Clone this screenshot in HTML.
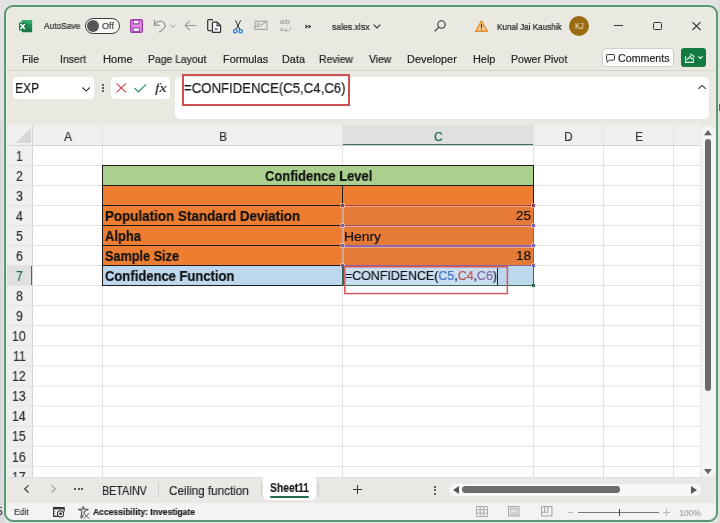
<!DOCTYPE html>
<html><head><meta charset="utf-8">
<style>
*{margin:0;padding:0;box-sizing:border-box}
html,body{width:720px;height:523px;overflow:hidden;background:#e2e2e3;font-family:"Liberation Sans",sans-serif;color:#1f1f1f;position:relative}
.a{position:absolute}
.t{position:absolute;white-space:nowrap;line-height:1;will-change:transform;-webkit-text-stroke:0.2px currentColor}
svg{position:absolute;overflow:visible}
</style></head><body>
<div class="a" style="left:0px;top:120px;width:5px;height:403px;background:#d9d9d9"></div>
<div class="a" style="left:718px;top:0px;width:2px;height:523px;background:#dedede"></div>
<div class="t" style="left:-3.5px;top:507px;font-size:10px;color:#333">5:</div>
<div class="a" style="left:719px;top:104px;width:1px;height:6.6px;background:#666"></div>
<div class="a" style="left:4px;top:5px;width:714px;height:517px;border-radius:9px;background:#eae9e1"></div>
<svg style="left:18.5px;top:19.5px" width="14" height="13" viewBox="0 0 14 13">
<rect x="2.8" y="0" width="10.3" height="12.3" rx="0.8" fill="#1b7a47"/>
<rect x="2.8" y="0" width="10.3" height="4.1" rx="0.8" fill="#2ea96a"/>
<rect x="2.8" y="4.1" width="10.3" height="4.1" fill="#1f8c52"/>
<rect x="0" y="2.4" width="7.3" height="8" rx="0.8" fill="#117a40"/>
<path d="M1.5 3.9 L5.8 9.1 M5.8 3.9 L1.5 9.1" stroke="#fff" stroke-width="1.6"/>
</svg>
<div class="t" style="left:44.10px;top:21.66px;font-size:8.55px;color:#262626;font-weight:normal;transform:scaleX(0.9787);transform-origin:0 0;">AutoSave</div>
<div class="a" style="left:84.5px;top:18px;width:35.5px;height:15.6px;border:1px solid #3c3c3c;border-radius:8px;background:#f8f8f5"></div>
<div class="a" style="left:87.4px;top:20.3px;width:11.4px;height:11.4px;border-radius:6px;background:#565656"></div>
<div class="t" style="left:102.39px;top:21.66px;font-size:8.55px;color:#4a4a4a;font-weight:normal;transform:scaleX(1.0640);transform-origin:0 0;">Off</div>
<svg style="left:130px;top:19px" width="13" height="14" viewBox="0 0 13 14">
<rect x="0.65" y="0.65" width="11.7" height="12.7" rx="1.3" fill="#e08ee6" stroke="#9e3daa" stroke-width="1.3"/>
<rect x="3.2" y="1.2" width="5.8" height="3.6" fill="#fff" stroke="#9e3daa" stroke-width="1.1"/>
<rect x="3.2" y="8.8" width="6.2" height="3.8" fill="#fff" stroke="#9e3daa" stroke-width="1.1"/>
</svg>
<svg style="left:153px;top:19px" width="14" height="14" viewBox="0 0 14 14">
<path d="M1.6 0.8 L1.3 6.3 L6.6 6.1" fill="none" stroke="#8c8c8c" stroke-width="1.1"/>
<path d="M1.5 6 C3.5 1.8 9.5 0.8 11.6 4.6 C13 7.3 11 10.5 6.2 13.2" fill="none" stroke="#8c8c8c" stroke-width="1.1"/>
</svg>
<svg style="left:170px;top:24px" width="6" height="4" viewBox="0 0 6 4"><path d="M0.5 0.8 L3 3.2 L5.5 0.8" fill="none" stroke="#999" stroke-width="0.9"/></svg>
<svg style="left:184px;top:20px" width="13" height="11" viewBox="0 0 13 11"><path d="M12.5 5.5 H1 M5.8 0.8 L1 5.5 L5.8 10.2" fill="none" stroke="#9a9a9a" stroke-width="1.1"/></svg>
<svg style="left:207px;top:19px" width="15" height="14" viewBox="0 0 15 14">
<path d="M5.6 1.6 V1.4 C5.6 0.9 5.2 0.6 4.7 0.6 H1.7 C1.1 0.6 0.7 1 0.7 1.6 V10.6 C0.7 11.2 1.1 11.6 1.7 11.6 H4.6" fill="none" stroke="#333" stroke-width="1.2"/>
<path d="M5.4 4 C5.4 3.4 5.8 3.1 6.3 3.1 H10.2 L13.6 6.5 V12.5 C13.6 13 13.2 13.4 12.7 13.4 H6.3 C5.8 13.4 5.4 13 5.4 12.5 Z" fill="#f4f4f2" stroke="#333" stroke-width="1.2"/>
<path d="M10.1 3.2 V6.6 H13.5" fill="none" stroke="#333" stroke-width="1.1"/>
<rect x="7.8" y="9" width="2.8" height="2.2" fill="#8a8a8a"/>
</svg>
<svg style="left:233px;top:19.5px" width="10" height="14" viewBox="0 0 10 14">
<path d="M2.3 0.3 L6.9 9.4 M7.7 0.3 L3.1 9.4" stroke="#333" stroke-width="1"/>
<circle cx="2.3" cy="11.2" r="1.75" fill="#d4e4f4" stroke="#3a80c8" stroke-width="1.3"/>
<circle cx="7.7" cy="11.2" r="1.75" fill="#d4e4f4" stroke="#3a80c8" stroke-width="1.3"/>
</svg>
<svg style="left:254px;top:20px" width="14" height="10" viewBox="0 0 14 10">
<path d="M0.6 6 V9.4 H12.9 V1.4 H5.3" fill="none" stroke="#a5a5a5" stroke-width="1.1"/>
<path d="M1.2 6.5 V1.8 C1.2 0.3 4.3 0.3 4.3 1.8 V6.5 Z" fill="none" stroke="#a5a5a5" stroke-width="1.1"/>
<path d="M2.75 3.5 V5" stroke="#a5a5a5" stroke-width="0.9"/>
<path d="M5.3 6.2 L12.3 1.9" stroke="#a5a5a5" stroke-width="1.1"/>
</svg>
<div class="t" style="left:279.66px;top:19.41px;font-size:6.96px;color:#a5a5a5;font-weight:normal;transform:scaleX(1.2282);transform-origin:0 0;letter-spacing:0.4px">ab</div>
<div class="t" style="left:279.66px;top:26.98px;font-size:5.22px;color:#a5a5a5;font-weight:normal;transform:scaleX(1.6303);transform-origin:0 0;">c</div>
<svg style="left:284px;top:26.5px" width="7" height="5.5" viewBox="0 0 7 5.5"><path d="M6.5 0 V1.5 C6.5 3 5.5 3.5 4.5 3.5 H1 M2.8 1.5 L0.8 3.5 L2.8 5.3" fill="none" stroke="#a5a5a5" stroke-width="0.9"/></svg>
<svg style="left:304.7px;top:25.2px" width="6" height="3.2" viewBox="0 0 6 3.2"><path d="M0.4 0.2 L2.2 1.6 L0.4 3 M3.5 0.2 L5.3 1.6 L3.5 3" fill="none" stroke="#222" stroke-width="1.1"/></svg>
<div class="t" style="left:331.54px;top:23.21px;font-size:9.20px;color:#262626;font-weight:normal;transform:scaleX(0.9414);transform-origin:0 0;">sales.xlsx</div>
<svg style="left:373px;top:24.2px" width="8" height="5" viewBox="0 0 8 5"><path d="M0.6 0.6 L4 4 L7.4 0.6" fill="none" stroke="#333" stroke-width="1.1"/></svg>
<svg style="left:433.5px;top:19.5px" width="12" height="12" viewBox="0 0 12 12"><circle cx="7.5" cy="4.5" r="3.7" fill="none" stroke="#333" stroke-width="1.1"/><path d="M4.6 7.4 L0.7 11.3" stroke="#333" stroke-width="1.2"/></svg>
<svg style="left:475px;top:19.5px" width="13" height="12" viewBox="0 0 13 12"><path d="M6.5 0.8 L12.3 11.3 H0.7 Z" fill="#f5c78a" stroke="#e08a2a" stroke-width="1.2" stroke-linejoin="round"/><path d="M6.5 4 V8" stroke="#333" stroke-width="1.1"/><circle cx="6.5" cy="9.6" r="0.7" fill="#333"/></svg>
<div class="t" style="left:496.95px;top:21.63px;font-size:9.42px;color:#222;font-weight:normal;transform:scaleX(0.8660);transform-origin:0 0;">Kunal Jai Kaushik</div>
<div class="a" style="left:569.1px;top:15.8px;width:19.9px;height:19.9px;border-radius:10px;background:#9a6b12"></div>
<div class="t" style="left:575.00px;top:21.57px;font-size:9.13px;color:#f6ead2;font-weight:normal;transform:scaleX(0.8241);transform-origin:0 0;-webkit-text-stroke:0">KJ</div>
<div class="a" style="left:614.4px;top:25px;width:8.3px;height:1.2px;background:#333"></div>
<div class="a" style="left:653.3px;top:22.2px;width:8.9px;height:7.8px;border:1.2px solid #333;border-radius:1.5px"></div>
<svg style="left:692px;top:22.2px" width="9" height="8.2" viewBox="0 0 9 8.2"><path d="M0.4 0.2 L8.6 8 M8.6 0.2 L0.4 8" stroke="#333" stroke-width="1.1"/></svg>
<div class="t" style="left:22.46px;top:53.64px;font-size:10.58px;color:#262626;font-weight:normal;transform:scaleX(0.9929);transform-origin:0 0;">File</div>
<div class="t" style="left:60.16px;top:53.64px;font-size:10.58px;color:#262626;font-weight:normal;transform:scaleX(0.9825);transform-origin:0 0;">Insert</div>
<div class="t" style="left:103.11px;top:53.64px;font-size:10.58px;color:#262626;font-weight:normal;transform:scaleX(1.0531);transform-origin:0 0;">Home</div>
<div class="t" style="left:148.47px;top:53.64px;font-size:10.58px;color:#262626;font-weight:normal;transform:scaleX(0.9811);transform-origin:0 0;">Page Layout</div>
<div class="t" style="left:222.73px;top:53.64px;font-size:10.58px;color:#262626;font-weight:normal;transform:scaleX(1.0256);transform-origin:0 0;">Formulas</div>
<div class="t" style="left:282.33px;top:53.64px;font-size:10.58px;color:#262626;font-weight:normal;transform:scaleX(1.0290);transform-origin:0 0;">Data</div>
<div class="t" style="left:319.27px;top:53.64px;font-size:10.58px;color:#262626;font-weight:normal;transform:scaleX(0.9777);transform-origin:0 0;">Review</div>
<div class="t" style="left:369.45px;top:53.64px;font-size:10.58px;color:#262626;font-weight:normal;transform:scaleX(0.9783);transform-origin:0 0;">View</div>
<div class="t" style="left:406.83px;top:53.64px;font-size:10.58px;color:#262626;font-weight:normal;transform:scaleX(1.0321);transform-origin:0 0;">Developer</div>
<div class="t" style="left:472.83px;top:53.64px;font-size:10.58px;color:#262626;font-weight:normal;transform:scaleX(1.0307);transform-origin:0 0;">Help</div>
<div class="t" style="left:510.86px;top:53.64px;font-size:10.58px;color:#262626;font-weight:normal;transform:scaleX(0.9974);transform-origin:0 0;">Power Pivot</div>
<div class="a" style="left:601.8px;top:47.7px;width:72.4px;height:19.5px;background:#fdfdfc;border:1px solid #cfcfcf;border-radius:4px"></div>
<svg style="left:606.3px;top:53.6px" width="9" height="9" viewBox="0 0 9 9"><path d="M1.3 0.55 H7.7 C8.1 0.55 8.45 0.9 8.45 1.3 V5.4 C8.45 5.8 8.1 6.15 7.7 6.15 H3.4 L1.1 8.3 V6.15 C0.75 6.1 0.55 5.8 0.55 5.4 V1.3 C0.55 0.9 0.9 0.55 1.3 0.55 Z" fill="none" stroke="#333" stroke-width="1"/></svg>
<div class="t" style="left:618.37px;top:53.24px;font-size:10.58px;color:#262626;font-weight:normal;transform:scaleX(1.0089);transform-origin:0 0;">Comments</div>
<div class="a" style="left:681.1px;top:48.3px;width:24.9px;height:18.9px;background:#137a41;border-radius:3px"></div>
<svg style="left:684.6px;top:52.8px" width="10" height="10" viewBox="0 0 10 10"><path d="M0.6 3.2 V9.4 H8.3 V5.6" fill="none" stroke="#e8f5ec" stroke-width="1.1"/><path d="M2.3 6.8 C2.4 4.8 4 3.5 6.2 3.3 L5.7 1 L9.4 3.4 L6.6 6.1 L6.3 4.6 C4.6 4.8 3.3 5.6 2.3 6.8 Z" fill="none" stroke="#e8f5ec" stroke-width="1" stroke-linejoin="round"/></svg>
<svg style="left:698px;top:56.3px" width="5" height="3" viewBox="0 0 5 3"><path d="M0.4 0.4 L2.5 2.5 L4.6 0.4" fill="none" stroke="#fff" stroke-width="1.1"/></svg>
<div class="a" style="left:6px;top:69.6px;width:711px;height:1.2px;background:#d7d5cd"></div>
<div class="a" style="left:12.5px;top:77px;width:81.7px;height:22.2px;background:#fff;border-radius:4px"></div>
<div class="t" style="left:15.34px;top:81.28px;font-size:14.20px;color:#1a1a1a;font-weight:normal;transform:scaleX(0.8472);transform-origin:0 0;">EXP</div>
<svg style="left:81.7px;top:86.7px" width="8.3" height="4.6" viewBox="0 0 8.3 4.6"><path d="M0.5 0.5 L4.15 4.1 L7.8 0.5" fill="none" stroke="#333" stroke-width="1.1"/></svg>
<div class="a" style="left:101.5px;top:83.7px;width:2px;height:2px;background:#333;border-radius:1px"></div>
<div class="a" style="left:101.5px;top:87px;width:2px;height:2px;background:#333;border-radius:1px"></div>
<div class="a" style="left:101.5px;top:90.3px;width:2px;height:2px;background:#333;border-radius:1px"></div>
<div class="a" style="left:111.3px;top:77px;width:58.7px;height:22.2px;background:#fff;border-radius:4px"></div>
<svg style="left:115.8px;top:83.3px" width="10.5" height="9.7" viewBox="0 0 10.5 9.7"><path d="M0.4 0.4 L10.1 9.3 M10.1 0.4 L0.4 9.3" stroke="#c8434a" stroke-width="1.1"/></svg>
<svg style="left:134.2px;top:83.7px" width="12.5" height="8.3" viewBox="0 0 12.5 8.3"><path d="M0.4 4 L4.3 7.8 L12.1 0.4" fill="none" stroke="#3b9a6a" stroke-width="1.2"/></svg>
<div class="t" style="left:154.84px;top:81.07px;font-size:13.50px;color:#333;font-weight:normal;transform:scaleX(1.1873);transform-origin:0 0;font-family:'Liberation Serif',serif;font-style:italic;">fx</div>
<div class="a" style="left:174.7px;top:77px;width:534.8px;height:42.2px;background:#fff;border-radius:5px"></div>
<div class="t" style="left:183.94px;top:81.45px;font-size:14.35px;color:#1a1a1a;font-weight:normal;transform:scaleX(0.9186);transform-origin:0 0;">=CONFIDENCE(C5,C4,C6)</div>
<div class="a" style="left:182px;top:74px;width:168px;height:31.5px;border:2px solid #cd5052"></div>
<svg style="left:697.8px;top:85px" width="8.2" height="4.2" viewBox="0 0 8.2 4.2"><path d="M0.4 3.9 L4.1 0.4 L7.8 3.9" fill="none" stroke="#333" stroke-width="1.1"/></svg>
<div class="a" style="left:6px;top:125px;width:694px;height:352px;background:#fff"></div>
<div class="a" style="left:6px;top:125px;width:694px;height:20px;background:#efefef"></div>
<div class="a" style="left:6px;top:125px;width:26px;height:352px;background:#efefef"></div>
<div class="a" style="left:342px;top:125px;width:192px;height:20px;background:#e0e0e0"></div>
<div class="a" style="left:342px;top:143.5px;width:192px;height:2px;background:#3c6e53"></div>
<div class="a" style="left:6px;top:265px;width:26px;height:20px;background:#e0e0e0"></div>
<div class="a" style="left:31px;top:265px;width:2px;height:20px;background:#3c6e53"></div>
<svg style="left:16px;top:128px" width="15" height="15" viewBox="0 0 15 15"><path d="M15 0 V15 H0 Z" fill="#d6d6d6"/></svg>
<div class="a" style="left:32px;top:145px;width:1px;height:352px;background:#e2e2e2"></div>
<div class="a" style="left:102px;top:125px;width:1px;height:352px;background:#e2e2e2"></div>
<div class="a" style="left:342px;top:125px;width:1px;height:352px;background:#e2e2e2"></div>
<div class="a" style="left:533px;top:125px;width:1px;height:352px;background:#e2e2e2"></div>
<div class="a" style="left:603px;top:125px;width:1px;height:352px;background:#e2e2e2"></div>
<div class="a" style="left:673px;top:125px;width:1px;height:352px;background:#e2e2e2"></div>
<div class="a" style="left:32px;top:125px;width:1px;height:352px;background:#d4d4d4"></div>
<svg style="left:6px;top:125px" width="694" height="352" viewBox="0 0 694 352"><rect x="0" y="20.00" width="694" height="1" fill="#e3e3e3"/><rect x="0" y="40.00" width="694" height="1" fill="#e3e3e3"/><rect x="0" y="60.00" width="694" height="1" fill="#e3e3e3"/><rect x="0" y="80.00" width="694" height="1" fill="#e3e3e3"/><rect x="0" y="100.00" width="694" height="1" fill="#e3e3e3"/><rect x="0" y="120.00" width="694" height="1" fill="#e3e3e3"/><rect x="0" y="140.00" width="694" height="1" fill="#e3e3e3"/><rect x="0" y="160.00" width="694" height="1" fill="#e3e3e3"/><rect x="0" y="180.00" width="694" height="1" fill="#e3e3e3"/><rect x="0" y="200.12" width="694" height="1" fill="#e3e3e3"/><rect x="0" y="220.24" width="694" height="1" fill="#e3e3e3"/><rect x="0" y="240.36" width="694" height="1" fill="#e3e3e3"/><rect x="0" y="260.48" width="694" height="1" fill="#e3e3e3"/><rect x="0" y="280.60" width="694" height="1" fill="#e3e3e3"/><rect x="0" y="300.72" width="694" height="1" fill="#e3e3e3"/><rect x="0" y="320.84" width="694" height="1" fill="#e3e3e3"/><rect x="0" y="340.96" width="694" height="1" fill="#e3e3e3"/></svg>
<div class="a" style="left:6px;top:144.5px;width:694px;height:1px;background:#d4d4d4"></div>
<div class="t" style="left:63.77px;top:130.19px;font-size:13.48px;color:#333;font-weight:normal;transform:scaleX(0.9000);transform-origin:0 0;">A</div>
<div class="t" style="left:218.58px;top:130.19px;font-size:13.48px;color:#333;font-weight:normal;transform:scaleX(0.9000);transform-origin:0 0;">B</div>
<div class="t" style="left:433.84px;top:130.19px;font-size:13.48px;color:#1e6b45;font-weight:normal;transform:scaleX(0.9000);transform-origin:0 0;">C</div>
<div class="t" style="left:564.22px;top:130.19px;font-size:13.48px;color:#333;font-weight:normal;transform:scaleX(0.9000);transform-origin:0 0;">D</div>
<div class="t" style="left:634.52px;top:130.19px;font-size:13.48px;color:#333;font-weight:normal;transform:scaleX(0.9000);transform-origin:0 0;">E</div>
<div class="t" style="left:704.86px;top:130.19px;font-size:13.48px;color:#333;font-weight:normal;transform:scaleX(0.9000);transform-origin:0 0;">F</div>
<div class="t" style="left:15.60px;top:148.73px;font-size:14.49px;color:#333;font-weight:normal;transform:scaleX(0.8500);transform-origin:0 0;">1</div>
<div class="t" style="left:15.78px;top:168.73px;font-size:14.49px;color:#333;font-weight:normal;transform:scaleX(0.8500);transform-origin:0 0;">2</div>
<div class="t" style="left:15.78px;top:188.73px;font-size:14.49px;color:#333;font-weight:normal;transform:scaleX(0.8500);transform-origin:0 0;">3</div>
<div class="t" style="left:15.84px;top:208.73px;font-size:14.49px;color:#333;font-weight:normal;transform:scaleX(0.8500);transform-origin:0 0;">4</div>
<div class="t" style="left:15.78px;top:228.73px;font-size:14.49px;color:#333;font-weight:normal;transform:scaleX(0.8500);transform-origin:0 0;">5</div>
<div class="t" style="left:15.72px;top:248.73px;font-size:14.49px;color:#333;font-weight:normal;transform:scaleX(0.8500);transform-origin:0 0;">6</div>
<div class="t" style="left:15.78px;top:268.73px;font-size:14.49px;color:#1e6b45;font-weight:normal;transform:scaleX(0.8500);transform-origin:0 0;">7</div>
<div class="t" style="left:15.75px;top:288.73px;font-size:14.49px;color:#333;font-weight:normal;transform:scaleX(0.8500);transform-origin:0 0;">8</div>
<div class="t" style="left:15.78px;top:308.73px;font-size:14.49px;color:#333;font-weight:normal;transform:scaleX(0.8500);transform-origin:0 0;">9</div>
<div class="t" style="left:12.12px;top:328.85px;font-size:14.49px;color:#333;font-weight:normal;transform:scaleX(0.8500);transform-origin:0 0;">10</div>
<div class="t" style="left:12.64px;top:348.97px;font-size:14.49px;color:#333;font-weight:normal;transform:scaleX(0.8500);transform-origin:0 0;">11</div>
<div class="t" style="left:12.21px;top:369.09px;font-size:14.49px;color:#333;font-weight:normal;transform:scaleX(0.8500);transform-origin:0 0;">12</div>
<div class="t" style="left:12.15px;top:389.21px;font-size:14.49px;color:#333;font-weight:normal;transform:scaleX(0.8500);transform-origin:0 0;">13</div>
<div class="t" style="left:12.09px;top:409.33px;font-size:14.49px;color:#333;font-weight:normal;transform:scaleX(0.8500);transform-origin:0 0;">14</div>
<div class="t" style="left:12.15px;top:429.45px;font-size:14.49px;color:#333;font-weight:normal;transform:scaleX(0.8500);transform-origin:0 0;">15</div>
<div class="t" style="left:12.15px;top:449.57px;font-size:14.49px;color:#333;font-weight:normal;transform:scaleX(0.8500);transform-origin:0 0;">16</div>
<div class="t" style="left:12.21px;top:469.69px;font-size:14.49px;color:#333;font-weight:normal;transform:scaleX(0.8500);transform-origin:0 0;">17</div>
<div class="a" style="left:102px;top:165px;width:432px;height:20px;background:#a9d08e"></div>
<div class="a" style="left:102px;top:185px;width:432px;height:80px;background:#ed7d31"></div>
<div class="a" style="left:102px;top:265px;width:432px;height:20px;background:#bdd7ee"></div>
<div class="a" style="left:343px;top:205px;width:191px;height:60px;background:#e67b38"></div>
<div class="a" style="left:102px;top:164.5px;width:432px;height:1px;background:#1a1a1a"></div>
<div class="a" style="left:102px;top:184.5px;width:432px;height:1px;background:#1a1a1a"></div>
<div class="a" style="left:102px;top:204.5px;width:432px;height:1px;background:#1a1a1a"></div>
<div class="a" style="left:102px;top:224.5px;width:432px;height:1px;background:#1a1a1a"></div>
<div class="a" style="left:102px;top:244.5px;width:432px;height:1px;background:#1a1a1a"></div>
<div class="a" style="left:102px;top:264.5px;width:432px;height:1px;background:#1a1a1a"></div>
<div class="a" style="left:102px;top:284.5px;width:432px;height:1px;background:#1a1a1a"></div>
<div class="a" style="left:102px;top:165px;width:1px;height:120px;background:#1a1a1a"></div>
<div class="a" style="left:533px;top:165px;width:1px;height:120px;background:#1a1a1a"></div>
<div class="a" style="left:342px;top:185px;width:1px;height:80px;background:#1a1a1a"></div>
<div class="t" style="left:104.93px;top:208.55px;font-size:14.35px;color:#111;font-weight:bold;transform:scaleX(0.9346);transform-origin:0 0;">Population Standard Deviation</div>
<div class="t" style="left:105.47px;top:228.55px;font-size:14.35px;color:#111;font-weight:bold;transform:scaleX(0.9066);transform-origin:0 0;">Alpha</div>
<div class="t" style="left:105.42px;top:248.55px;font-size:14.35px;color:#111;font-weight:bold;transform:scaleX(0.8842);transform-origin:0 0;">Sample Size</div>
<div class="t" style="left:105.28px;top:268.55px;font-size:14.35px;color:#111;font-weight:bold;transform:scaleX(0.9076);transform-origin:0 0;">Confidence Function</div>
<div class="t" style="left:265.08px;top:168.73px;font-size:14.49px;color:#111;font-weight:bold;transform:scaleX(0.8944);transform-origin:0 0;">Confidence Level</div>
<div class="t" style="left:516.33px;top:209.21px;font-size:13.33px;color:#111;font-weight:normal;transform:scaleX(1.0074);transform-origin:0 0;">25</div>
<div class="t" style="left:516.48px;top:248.91px;font-size:13.33px;color:#111;font-weight:normal;transform:scaleX(1.0176);transform-origin:0 0;">18</div>
<div class="t" style="left:344.49px;top:229.74px;font-size:13.19px;color:#111;font-weight:normal;transform:scaleX(1.0539);transform-origin:0 0;">Henry</div>
<div class="a" style="left:342px;top:206px;width:2px;height:59px;background:#d9a58e"></div>
<div class="a" style="left:342px;top:205px;width:192px;height:1px;background:#a2474f"></div>
<div class="a" style="left:344px;top:206px;width:189px;height:1px;background:#f1a582"></div>
<div class="a" style="left:342px;top:225px;width:192px;height:1px;background:#9a5878"></div>
<div class="a" style="left:344px;top:226px;width:189px;height:1px;background:#f0a688"></div>
<div class="a" style="left:342px;top:245px;width:192px;height:1.5px;background:#8c6aa8"></div>
<div class="a" style="left:344px;top:246.5px;width:189px;height:1px;background:#eea58c"></div>
<div class="a" style="left:342px;top:264.5px;width:192px;height:1px;background:#8464a4"></div>
<div class="a" style="left:533px;top:205px;width:1px;height:20px;background:#a2474f"></div>
<div class="a" style="left:533px;top:225px;width:1px;height:40px;background:#6e64aa"></div>
<div class="a" style="left:341px;top:204px;width:3px;height:3px;background:#8d3c5c;box-shadow:0 0 0 0.6px #f4d8d0"></div>
<div class="a" style="left:532px;top:204px;width:3px;height:3px;background:#8d3c5c;box-shadow:0 0 0 0.6px #f4d8d0"></div>
<div class="a" style="left:341px;top:224px;width:3px;height:3px;background:#7560b4;box-shadow:0 0 0 0.6px #f4d8d0"></div>
<div class="a" style="left:532px;top:224px;width:3px;height:3px;background:#7560b4;box-shadow:0 0 0 0.6px #f4d8d0"></div>
<div class="a" style="left:341px;top:244px;width:3px;height:3px;background:#7560b4;box-shadow:0 0 0 0.6px #f4d8d0"></div>
<div class="a" style="left:532px;top:244px;width:3px;height:3px;background:#7560b4;box-shadow:0 0 0 0.6px #f4d8d0"></div>
<div class="a" style="left:341px;top:264px;width:3px;height:3px;background:#7560b4;box-shadow:0 0 0 0.6px #f4d8d0"></div>
<div class="a" style="left:532px;top:264px;width:3px;height:3px;background:#7560b4;box-shadow:0 0 0 0.6px #f4d8d0"></div>
<div class="a" style="left:344px;top:267px;width:154px;height:18px;background:#c9def2"></div>
<div class="a" style="left:342px;top:265.5px;width:2px;height:20.5px;background:#2f6b4c"></div>
<div class="a" style="left:342px;top:284.5px;width:192px;height:1.5px;background:#3b6e55"></div>
<div class="a" style="left:533px;top:265.5px;width:1px;height:20.5px;background:#3b6e55"></div>
<div class="a" style="left:531.5px;top:283.5px;width:3.5px;height:3.5px;background:#2f6b4c"></div>
<div class="t" style="left:344.98px;top:269.37px;font-size:13.62px;color:#111;font-weight:normal;transform:scaleX(0.9112);transform-origin:0 0;">=CONFIDENCE(<span style="color:#4472c4">C5</span>,<span style="color:#c0504d">C4</span>,<span style="color:#8064a2">C6</span>)</div>
<div class="a" style="left:497.3px;top:267.5px;width:1px;height:17px;background:#222"></div>
<svg style="left:343px;top:265px" width="166" height="30" viewBox="0 0 166 30"><rect x="1.85" y="1.75" width="162.5" height="26.8" fill="none" stroke="#d4575a" stroke-width="1.5"/></svg>
<div class="a" style="left:700px;top:124px;width:17px;height:353px;background:#eae9e4"></div>
<div class="a" style="left:701px;top:125.5px;width:13.5px;height:352px;background:#f4f4f4;border-radius:6.5px"></div>
<svg style="left:704.2px;top:129.6px" width="7.8" height="5.2" viewBox="0 0 7.8 5.2"><path d="M3.9 0 L7.8 5.2 H0 Z" fill="#626262"/></svg>
<div class="a" style="left:705px;top:139px;width:6px;height:252px;background:#6b6b6b;border-radius:3px"></div>
<svg style="left:704.2px;top:468.8px" width="7.8" height="5.2" viewBox="0 0 7.8 5.2"><path d="M0 0 H7.8 L3.9 5.2 Z" fill="#626262"/></svg>
<div class="a" style="left:6px;top:477px;width:711px;height:25.5px;background:#e9e8e5"></div>
<div class="a" style="left:6px;top:476.5px;width:694px;height:1px;background:#dedede"></div>
<svg style="left:24.4px;top:485.3px" width="5" height="7.8" viewBox="0 0 5 7.8"><path d="M4.6 0.3 L0.7 3.9 L4.6 7.5" fill="none" stroke="#333" stroke-width="1.1"/></svg>
<svg style="left:51px;top:485.3px" width="5" height="7.8" viewBox="0 0 5 7.8"><path d="M0.4 0.3 L4.3 3.9 L0.4 7.5" fill="none" stroke="#9a9a9a" stroke-width="1.1"/></svg>
<div class="a" style="left:74.0px;top:488.1px;width:2.4px;height:2.4px;background:#262626;border-radius:1.2px"></div>
<div class="a" style="left:77.5px;top:488.1px;width:2.4px;height:2.4px;background:#262626;border-radius:1.2px"></div>
<div class="a" style="left:81.0px;top:488.1px;width:2.4px;height:2.4px;background:#262626;border-radius:1.2px"></div>
<div class="t" style="left:102.15px;top:483.96px;font-size:13.04px;color:#262626;font-weight:normal;transform:scaleX(0.8188);transform-origin:0 0;">BETAINV</div>
<div class="a" style="left:158px;top:482px;width:1px;height:15px;background:#cfcfcf"></div>
<div class="t" style="left:168.92px;top:483.96px;font-size:13.04px;color:#262626;font-weight:normal;transform:scaleX(0.8956);transform-origin:0 0;">Ceiling function</div>
<div class="a" style="left:261px;top:482px;width:1px;height:15px;background:#cfcfcf"></div>
<div class="a" style="left:263.3px;top:477px;width:52.5px;height:23px;background:#fff;border-radius:0 0 5px 5px"></div>
<div class="t" style="left:269.99px;top:481.46px;font-size:13.04px;color:#1a1a1a;font-weight:bold;transform:scaleX(0.7903);transform-origin:0 0;">Sheet11</div>
<div class="a" style="left:270.3px;top:495.5px;width:38.5px;height:2px;background:#1e6b45;border-radius:1px"></div>
<div class="a" style="left:318px;top:482px;width:1px;height:15px;background:#cfcfcf"></div>
<svg style="left:353px;top:485.2px" width="9" height="9" viewBox="0 0 9 9"><path d="M4.5 0 V9 M0 4.5 H9" stroke="#333" stroke-width="1"/></svg>
<div class="a" style="left:434px;top:485.5px;width:2px;height:2px;background:#333;border-radius:1px"></div>
<div class="a" style="left:434px;top:489px;width:2px;height:2px;background:#333;border-radius:1px"></div>
<div class="a" style="left:434px;top:492.5px;width:2px;height:2px;background:#333;border-radius:1px"></div>
<div class="a" style="left:448.5px;top:483.5px;width:252px;height:12.5px;background:#f7f7f7;border-radius:6px"></div>
<svg style="left:452.5px;top:486px" width="6" height="8" viewBox="0 0 6 8"><path d="M6 0 V8 L0 4 Z" fill="#555"/></svg>
<div class="a" style="left:462px;top:486.2px;width:157.5px;height:6.8px;background:#6b6b6b;border-radius:3.4px"></div>
<svg style="left:691px;top:486px" width="6" height="8" viewBox="0 0 6 8"><path d="M0 0 V8 L6 4 Z" fill="#555"/></svg>
<div class="a" style="left:6px;top:502.5px;width:711px;height:18px;background:#f3f3f3"></div>
<div class="t" style="left:14.42px;top:508.27px;font-size:9.13px;color:#444;font-weight:normal;transform:scaleX(0.9311);transform-origin:0 0;">Edit</div>
<svg style="left:53px;top:507px" width="12" height="10" viewBox="0 0 12 10">
<path d="M5 9.4 H0.6 V0.6 H11.2 V4.5" fill="none" stroke="#333" stroke-width="1.1"/>
<path d="M0.6 1.6 H11.2" stroke="#333" stroke-width="1.6"/>
<path d="M2 4.2 V5 M2 6.4 V7.2 M2 8.4 V9" stroke="#555" stroke-width="0.9"/>
<circle cx="7.5" cy="6.8" r="3.1" fill="#f3f3f3" stroke="#333" stroke-width="1.1"/>
<circle cx="7.5" cy="6.8" r="1.3" fill="#222"/>
</svg>
<svg style="left:78px;top:506px" width="12" height="13" viewBox="0 0 12 13">
<path d="M5.3 0.6 C4.2 0.6 4 2.2 5.3 2.6 C6.6 2.2 6.4 0.6 5.3 0.6 Z" fill="none" stroke="#333" stroke-width="0.9"/>
<path d="M0.5 3.4 C2.5 3.2 4 3 5.3 3 C6.6 3 8 3.2 10.3 3.4 C9 4.2 7.5 4.8 6.5 5.2 L6 7.2" fill="none" stroke="#333" stroke-width="1"/>
<path d="M0.5 3.4 C2 4.2 3.4 4.8 4 5.2 L2.8 11.6 C3.2 12.4 4 12 4.4 11 L5.5 8.5" fill="none" stroke="#333" stroke-width="1"/>
<path d="M5.8 7.2 L11.2 12.6 M11.2 7.2 L5.8 12.6" stroke="#444" stroke-width="0.9"/>
</svg>
<div class="t" style="left:92.79px;top:508.27px;font-size:9.13px;color:#222;font-weight:bold;transform:scaleX(0.9350);transform-origin:0 0;">Accessibility: Investigate</div>
<svg style="left:475.5px;top:506px" width="12" height="11" viewBox="0 0 12 11"><path d="M0.5 0.5 H11.5 V10.5 H0.5 Z M0.5 3.8 H11.5 M0.5 7.2 H11.5 M4.2 0.5 V10.5 M7.8 0.5 V10.5" fill="none" stroke="#aaa" stroke-width="1"/></svg>
<svg style="left:508.3px;top:506.2px" width="11.5" height="10.5" viewBox="0 0 11.5 10.5"><rect x="0.55" y="0.55" width="10.4" height="9.4" fill="none" stroke="#a8a8a8" stroke-width="1.1"/><rect x="2.8" y="2.4" width="5.9" height="5.8" fill="none" stroke="#a8a8a8" stroke-width="0.9"/><path d="M4 4.2 H7.5 M4 6.3 H7.5" stroke="#b5b5b5" stroke-width="0.8"/></svg>
<svg style="left:541.2px;top:506.2px" width="11.5" height="10.5" viewBox="0 0 11.5 10.5"><rect x="0.55" y="0.55" width="10.4" height="9.4" fill="none" stroke="#a8a8a8" stroke-width="1.1"/><path d="M0.6 6.3 H6.9 V0.6 M3.6 0.6 V6.3" fill="none" stroke="#a8a8a8" stroke-width="1.1"/></svg>
<div class="a" style="left:567.5px;top:511.5px;width:5.5px;height:1px;background:#b5b5b5"></div>
<div class="a" style="left:578px;top:511.5px;width:81px;height:1.2px;background:#777"></div>
<div class="a" style="left:618.5px;top:508.5px;width:1.2px;height:7px;background:#444"></div>
<svg style="left:663px;top:508.5px" width="7" height="7" viewBox="0 0 7 7"><path d="M3.5 0 V7 M0 3.5 H7" stroke="#b5b5b5" stroke-width="1"/></svg>
<div class="t" style="left:678.86px;top:507.53px;font-size:9.42px;color:#a5a5a5;font-weight:normal;transform:scaleX(0.9099);transform-origin:0 0;">100%</div>
<div class="a" style="left:4px;top:5px;width:714px;height:517px;border:2px solid #5e9474;border-radius:9px;box-shadow:0 0 0 1px #dcefe2, inset 0 0 0 1px #e6f5ea"></div>
</body></html>
